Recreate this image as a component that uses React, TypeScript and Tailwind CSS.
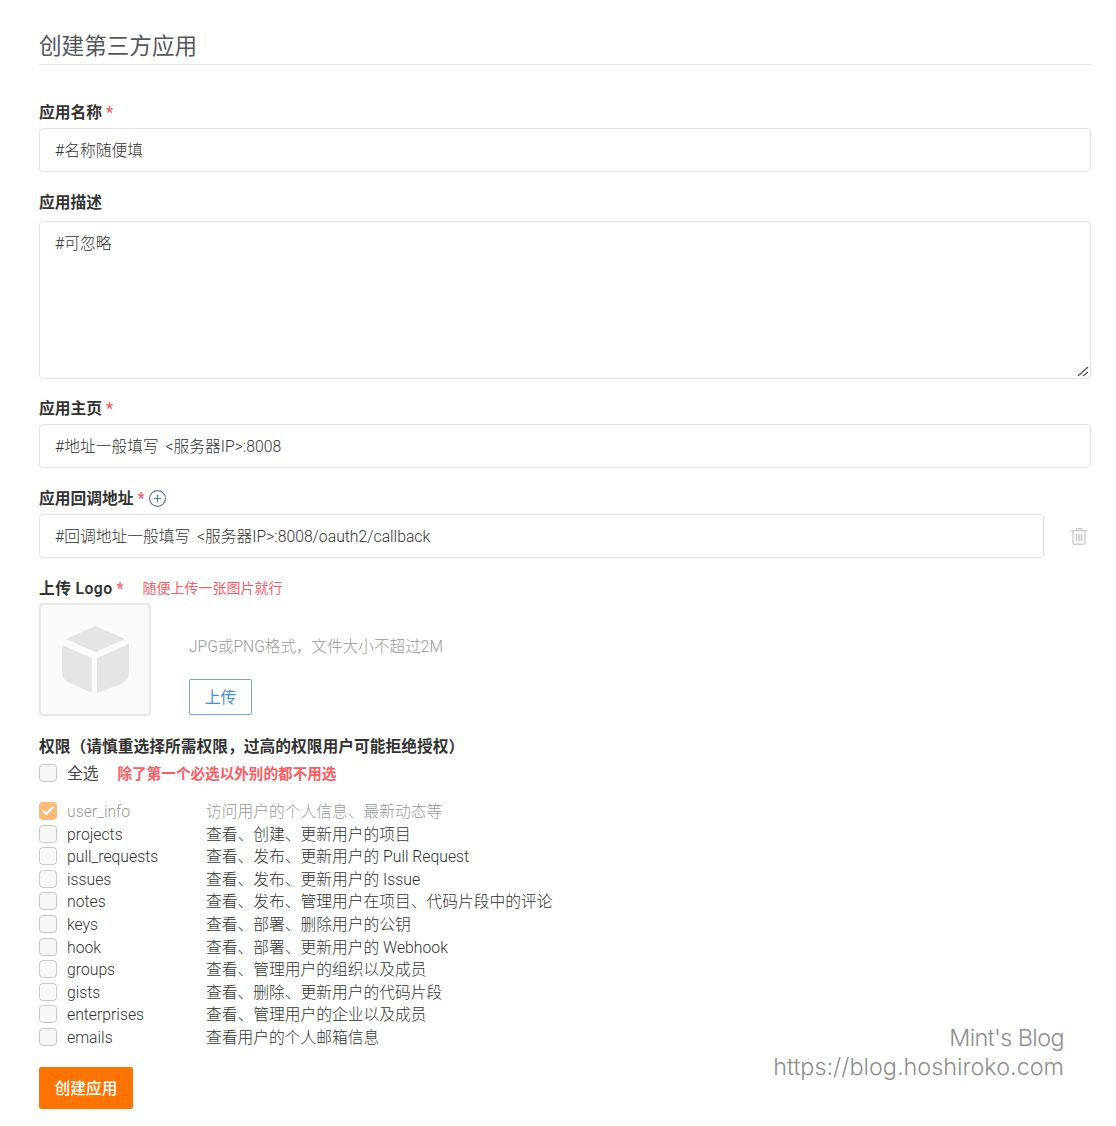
import React from 'react';
import { CirclePlus, Check } from 'lucide-react';

const fontStack = 'font-["Roboto","Noto_Sans_CJK_SC",sans-serif]';

const scopes = [
  ['projects', '查看、创建、更新用户的项目'],
  ['pull_requests', '查看、发布、更新用户的 Pull Request'],
  ['issues', '查看、发布、更新用户的 Issue'],
  ['notes', '查看、发布、管理用户在项目、代码片段中的评论'],
  ['keys', '查看、部署、删除用户的公钥'],
  ['hook', '查看、部署、更新用户的 Webhook'],
  ['groups', '查看、管理用户的组织以及成员'],
  ['gists', '查看、删除、更新用户的代码片段'],
  ['enterprises', '查看、管理用户的企业以及成员'],
  ['emails', '查看用户的个人邮箱信息'],
];

const Label: React.FC<{ text: string; required?: boolean; className?: string; children?: React.ReactNode }> = ({ text, required, className, children }) => (
  <div className="flex h-6 items-center pt-[2px] text-[15.75px] leading-6 font-semibold text-[#333]">
    <span className={className}>{text}</span>
    {required && <span className="ml-1 text-[#ff5a5f]">*</span>}
    {children}
  </div>
);

const Field: React.FC<{ value: string; className?: string }> = ({ value, className }) => (
  <input
    readOnly
    value={value}
    className={`block h-11 rounded border border-[#e1e2ea] bg-white pr-4 pb-[2px] pl-[15px] text-[15.75px] font-light [word-spacing:3px] text-[#333] outline-none ${fontStack} ${className ?? ''}`}
  />
);

const Box: React.FC = () => <span className="block size-[18px] shrink-0 rounded-[4px] border border-[#c8c8c8] bg-[#f8f8f8]" />;

const CubeIcon: React.FC = () => (
  <svg width="68" height="68" viewBox="62 626 68 68" fill="#e4e4e4" className="ml-[2px]">
    <path d="M95.7 626 125 639 95.7 652 65.7 639Z" />
    <path d="M62 645 91.7 658V692.7L70 683Q62 680 62 672Z" />
    <path d="M97 658 129 644V672Q129 680 121 684L97 693Z" />
  </svg>
);

const TrashIcon: React.FC = () => (
  <svg width="16" height="17" viewBox="0 0 16 17" fill="none" stroke="#cfcfcf" strokeWidth="1.4">
    <path d="M0 2.7H16M5.5 2.5V.8H10.5V2.5" />
    <path d="M2 3V15.2Q2 16.2 3 16.2H13Q14 16.2 14 15.2V3" />
    <path d="M5.5 5.5V13.5M8 5.5V13.5M10.5 5.5V13.5" strokeWidth="1.6" />
  </svg>
);

const ResizeGrip: React.FC = () => (
  <svg width="12" height="12" viewBox="0 0 12 12" fill="none" stroke="#555" strokeWidth="1.3" className="absolute right-[2px] bottom-[2px]">
    <path d="M1 11 11 2M6 11 11 7" />
  </svg>
);

export default function App() {
  return (
    <div className={`relative h-[1126px] w-[1116px] overflow-hidden bg-white pt-[28px] pr-[25px] pl-[39px] text-[#444] ${fontStack}`}>
      <h1 className="h-[37px] border-b border-[#e6e6e6] text-[22.6px] leading-[38px] font-normal text-[#55575f]">创建第三方应用</h1>

      <div className="mt-[35px]">
        <Label text="应用名称" required />
        <Field value="#名称随便填" className="mt-1 w-full" />
      </div>

      <div className="mt-[18px]">
        <Label text="应用描述" />
        <div className="relative mt-[7px]">
          <textarea
            readOnly
            defaultValue="#可忽略"
            className="block h-[158px] w-full resize-none rounded border border-[#e1e2ea] bg-white py-[11px] pr-4 pl-[15px] text-[15.75px] leading-[22px] font-light text-[#333] outline-none"
          />
          <ResizeGrip />
        </div>
      </div>

      <div className="mt-[17px]">
        <Label text="应用主页" required />
        <Field value="#地址一般填写 <服务器IP>:8008" className="mt-1 w-full" />
      </div>

      <div className="mt-[18px]">
        <Label text="应用回调地址" required>
          <CirclePlus className="-mt-[2px] ml-[3px] size-[19px] text-[#5d7f99]" strokeWidth={1.5} />
        </Label>
        <div className="mt-1 flex items-center">
          <Field value="#回调地址一般填写 <服务器IP>:8008/oauth2/callback" className="w-[1005px]" />
          <span className="ml-[27px]"><TrashIcon /></span>
        </div>
      </div>

      <div className="mt-[18px]">
        <div className="flex h-6 items-center">
          <Label text="上传 Logo" required className="tracking-[0.4px]" />
          <span className="ml-[19px] text-sm text-[#ff5a5f]">随便上传一张图片就行</span>
        </div>
        <div className="mt-[3px] flex">
          <div className="flex h-[113px] w-[112px] items-center justify-center rounded border-2 border-[#e8e8e8] bg-[#fafafa]">
            <CubeIcon />
          </div>
          <div className="ml-[38px] flex flex-col">
            <p className="mt-[32px] text-[15.6px] leading-6 font-light text-[#999]">JPG或PNG格式，文件大小不超过2M</p>
            <button className="mt-[20px] h-[36px] w-[63px] rounded-[2px] border border-[#6aa9ec] bg-white pt-[2px] text-[15.75px] text-[#3f8ee0]">上传</button>
          </div>
        </div>
      </div>

      <div className="mt-[18px]">
        <Label text="权限（请慎重选择所需权限，过高的权限用户可能拒绝授权）" />
        <div className="mt-[6px] flex h-[18px] items-center">
          <Box />
          <span className="ml-[10px] pt-[2px] text-[15.75px]">全选</span>
          <span className="ml-[19px] pt-[3px] text-[14.6px] font-bold text-[#ff5a5f]">除了第一个必选以外别的都不用选</span>
        </div>
      </div>

      <div className="mt-[20px] flex h-[22.6px] items-start">
        <span className="flex size-[18px] shrink-0 items-center justify-center rounded-[4px] bg-[#ffb979]">
          <Check className="size-3.5 text-white" strokeWidth={4} />
        </span>
        <span className="ml-[10px] w-[139px] pt-px text-[15.75px] leading-[18px] font-light text-[#999]">user_info</span>
        <span className="pt-px text-[15.75px] leading-[18px] font-light text-[#999]">访问用户的个人信息、最新动态等</span>
      </div>
      {scopes.map(([name, desc]) => (
        <div key={name} className="flex h-[22.6px] items-start">
          <Box />
          <span className="ml-[10px] w-[139px] pt-px text-[15.75px] leading-[18px] font-light text-[#333]">{name}</span>
          <span className="pt-px text-[15.75px] leading-[18px] font-light text-[#333]">{desc}</span>
        </div>
      ))}

      <button className="mt-[16px] h-[42px] w-[94px] rounded-[2px] bg-[#ff7300] pt-[2px] text-[15.75px] font-medium text-white">创建应用</button>

      <div className="absolute top-[1023px] right-[52px] text-right font-['Inter',sans-serif] text-[23.4px] leading-[29px] font-light text-[#8f8f8f]">
        <div className="tracking-[-0.6px]">Mint's Blog</div>
        <div>https://blog.hoshiroko.com</div>
      </div>
    </div>
  );
}
